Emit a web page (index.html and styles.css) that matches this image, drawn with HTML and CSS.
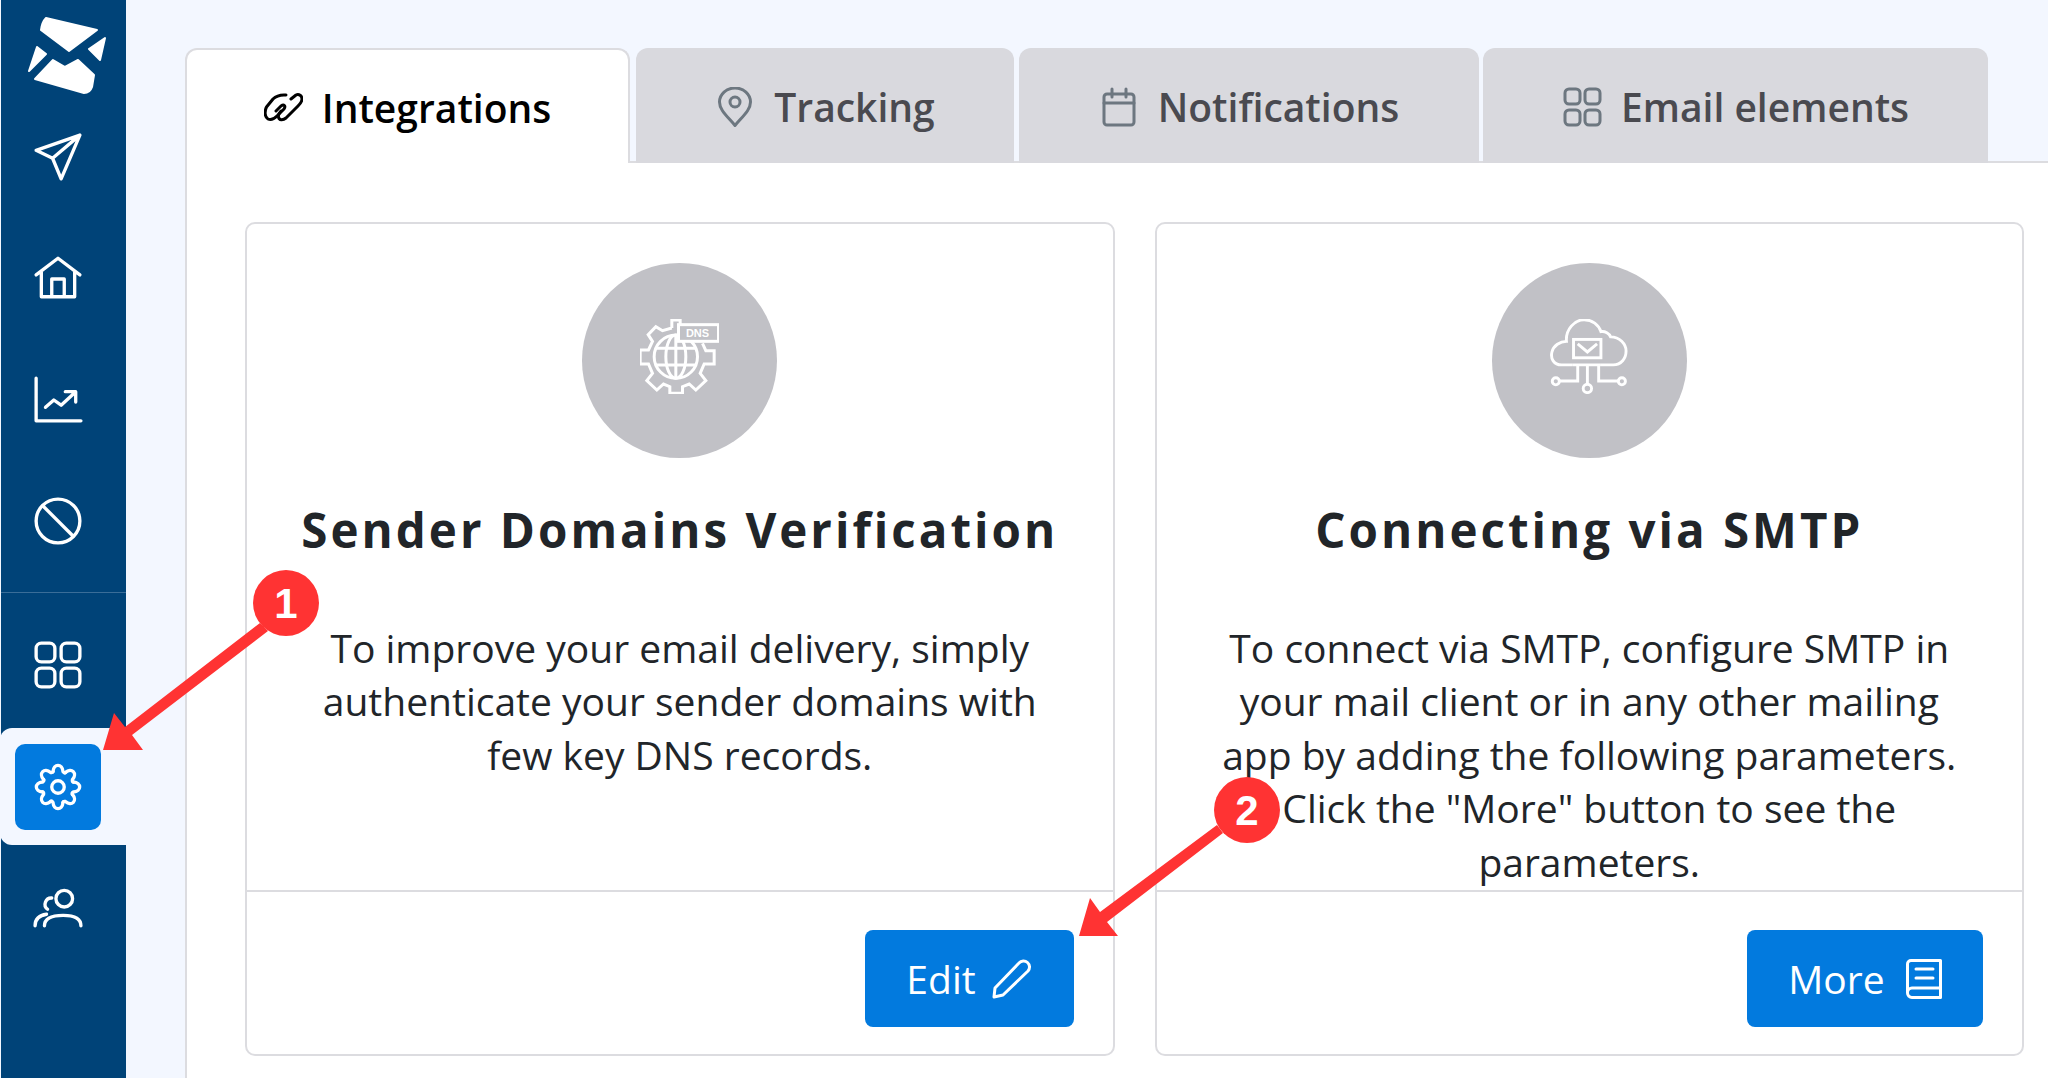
FILE: index.html
```html
<!DOCTYPE html>
<html lang="en">
<head>
<meta charset="utf-8">
<title>Integrations</title>
<link rel="stylesheet" href="styles.css">
</head>
<body>
<div class="app">
  <aside class="sidebar">
    <div class="logo">
      <svg width="78" height="78" viewBox="28 16 78 78"><g fill="#fff" stroke="#fff" stroke-width="2" stroke-linejoin="round"><path d="M46 18 L97 30 L69 51 L41 30 Q42 22 46 18Z"/><path d="M37 47 L46 54 L29 71Z"/><path d="M105 38 L100 60 L89 49Z"/><path d="M53 60 L65 67 L78 60 L94 75 L92 87 Q90 93 84 93 L35 79Z"/></g></svg>
    </div>
    <nav class="nav">
      <a class="nav-item"><svg class="ico" viewBox="0 0 24 24"><path d="M22.5 1.5 L1.5 8.8 L9.4 12.6 L13.5 22.5 Z M9.4 12.6 L22.5 1.5"/></svg></a>
      <a class="nav-item"><svg class="ico" viewBox="0 0 24 24"><path d="M1.5 10.5 L12 2.5 L22.5 10.5 M4 9V21H20V9 M9 21V12.5H15V21"/></svg></a>
      <a class="nav-item"><svg class="ico" viewBox="0 0 24 24"><path d="M1.5 1.5V22H23 M6 15.5 L10 12 L13.5 14.5 L20 8.5 M15.5 8 H20.5 V13"/></svg></a>
      <a class="nav-item"><svg class="ico" viewBox="0 0 24 24"><circle cx="12" cy="12" r="10.5"/><path d="M4.8 4.8 L19.2 19.2"/></svg></a>
    </nav>
    <div class="nav-rule"></div>
    <nav class="nav nav-lower">
      <a class="nav-item"><svg class="ico" viewBox="0 0 24 24"><rect x="1.5" y="1.5" width="9" height="9" rx="2.5"/><rect x="13.5" y="1.5" width="9" height="9" rx="2.5"/><rect x="1.5" y="13.5" width="9" height="9" rx="2.5"/><rect x="13.5" y="13.5" width="9" height="9" rx="2.5"/></svg></a>
      <a class="nav-item nav-active"><span class="nav-chip"><svg class="ico" viewBox="0 0 24 24">
        <defs><path id="tooth" d="M9.6 4.6 C9.9 0.6 14.1 0.6 14.4 4.6 Q15 5.5 15.6 5.1"/></defs>
        <use href="#tooth"/><use href="#tooth" transform="rotate(45 12 12)"/><use href="#tooth" transform="rotate(90 12 12)"/><use href="#tooth" transform="rotate(135 12 12)"/><use href="#tooth" transform="rotate(180 12 12)"/><use href="#tooth" transform="rotate(225 12 12)"/><use href="#tooth" transform="rotate(270 12 12)"/><use href="#tooth" transform="rotate(315 12 12)"/>
        <circle cx="12" cy="12" r="3"/></svg></span></a>
      <a class="nav-item"><svg class="ico" viewBox="0 0 24 24"><circle cx="15" cy="7.5" r="4"/><path d="M5.5 20.5 C5.5 16.5 10 15.5 14.5 15.5 C19 15.5 23 16.5 23 20.5 M9 7.2 A3 3 0 0 0 7 12.6 M1 20.5 C1 17.5 3 15.5 6.5 15"/></svg></a>
    </nav>
  </aside>

  <main class="main">
    <div class="tabs">
      <a class="tab tab-active"><svg class="tab-ico tab-ico-link" viewBox="0 0 39 29"><path d="M22 2 C16 1.5 12 3 9 6 L2.5 14 C0.5 18 0.5 24 4 26 C7 27.5 10 26 13 23 L20 16 C22 13 20 11 17 13 L12 18"/><path d="M17 18 C15 20 14 22 14.5 24 C15 27.5 19 27.5 22 25 L34 13 C36 11 38 9 38 6 C38 3 35 0.5 32 2 L27 6"/></svg><span>Integrations</span></a>
      <a class="tab"><svg class="tab-ico tab-ico-grey" viewBox="0 0 40 40"><path d="M20 38.5 C12 29 4.5 23 4.5 15 A15.5 14 0 0 1 35.5 15 C35.5 23 28 29 20 38.5Z"/><circle cx="20" cy="15" r="5"/></svg><span>Tracking</span></a>
      <a class="tab"><svg class="tab-ico tab-ico-grey" viewBox="0 0 40 40"><rect x="5" y="7" width="30" height="31" rx="3"/><path d="M5 16H35 M13 2V10 M27 2V10"/></svg><span>Notifications</span></a>
      <a class="tab"><svg class="tab-ico tab-ico-grey" viewBox="0 0 40 40"><rect x="3" y="2" width="15" height="15" rx="4"/><rect x="23" y="2" width="15" height="15" rx="4"/><rect x="3" y="23" width="15" height="15" rx="4"/><rect x="23" y="23" width="15" height="15" rx="4"/></svg><span>Email elements</span></a>
    </div>
    <section class="panel">
      <article class="card">
        <div class="card-body">
          <div class="disc">
            <svg class="disc-art" width="79" height="75" viewBox="238 205 236 225"><path d="M333 232 V208 H358 V222 M333 232 L305 240 L285 228 L262 252 L275 272 L263 298 H238 V340 H263 L275 368 L258 390 L288 418 L308 400 L327 408 V428 H365 V408 L385 400 L405 418 L435 390 L418 368 L430 340 H460 V300 H435 L425 278"/><circle cx="345" cy="318" r="65"/><ellipse cx="345" cy="318" rx="30" ry="65"/><path d="M345 253V383 M285 293H405 M285 343H405"/><rect class="dns-box" x="353" y="222" width="120" height="50"/><text class="dns" x="410" y="260" text-anchor="middle">DNS</text></svg>
          </div>
          <h2 class="card-title">Sender Domains Verification</h2>
          <p class="card-text">To improve your email delivery, simply<br>authenticate your sender domains with<br>few key DNS records.</p>
        </div>
        <footer class="card-foot">
          <a class="btn btn-edit">Edit<svg class="btn-ico" width="40" height="40" viewBox="0 0 40 40"><path d="M2 38 L3 29 L27 4 A5.5 5.5 0 0 1 36 12 L11 36 Z"/></svg></a>
        </footer>
      </article>
      <article class="card">
        <div class="card-body">
          <div class="disc">
            <svg class="disc-art" width="78" height="75" viewBox="234 203 242 232"><path d="M305 345 H270 C245 345 235 325 240 305 C245 285 265 272 285 272 C282 235 310 205 340 205 C365 205 385 220 392 242 C405 240 418 248 422 258 C450 258 470 280 470 302 C470 325 455 345 430 345 H392"/><rect x="307" y="266" width="85" height="57"/><path d="M320 280 L350 305 L380 280 M305 345 H392 M320 345 V395 H263 M350 345 V405 M385 345 V395 H447"/><circle cx="252" cy="396" r="11"/><circle cx="457" cy="396" r="11"/><circle cx="350" cy="418" r="13"/></svg>
          </div>
          <h2 class="card-title">Connecting via SMTP</h2>
          <p class="card-text">To connect via SMTP, configure SMTP in<br>your mail client or in any other mailing<br>app by adding the following parameters.<br>Click the "More" button to see the<br>parameters.</p>
        </div>
        <footer class="card-foot">
          <a class="btn btn-more">More<svg class="btn-ico" width="36" height="40" viewBox="0 0 36 40"><path d="M5 1.5H34.5V38.5H6 A4.5 4.5 0 0 1 1.5 34 V5 A3.5 3.5 0 0 1 5 1.5Z M1.5 33 A4.5 4.5 0 0 1 6 29 H34.5 M10 10H27 M10 19H27"/></svg></a>
        </footer>
      </article>
    </section>
  </main>
</div>

<svg class="marks" width="2048" height="1078" viewBox="0 0 2048 1078">
  <g fill="#ff3333">
    <path d="M260 623 L125 727 L114 713 L103 750 L143 750 L132 735 L268 631Z"/>
    <circle cx="286" cy="603" r="33"/>
    <path d="M1217 825 L1100 912 L1090 898 L1079 936 L1118 936 L1107 922 L1223 833Z"/>
    <circle cx="1247" cy="810" r="33"/>
  </g>
  <text class="mark-num" x="286" y="618" text-anchor="middle">1</text>
  <text class="mark-num" x="1247" y="825" text-anchor="middle">2</text>
</svg>
</body>
</html>
```

FILE: styles.css
```css
* { box-sizing: border-box; }
html, body { margin: 0; height: 100%; overflow: hidden; }
body { background: #f3f7ff; font-family: "Open Sans", sans-serif; color: #212529; position: relative; }

.app { display: flex; height: 1078px; }

.sidebar { width: 125px; margin-left: 1px; background: #004378; flex: none; }
.logo { height: 96px; padding: 16px 0 0 27px; }
.logo svg { display: block; }
.nav { display: flex; flex-direction: column; }
.nav-item { height: 121.5px; display: flex; align-items: center; justify-content: center; padding-right: 11px; }
.ico { width: 50px; height: 50px; fill: none; stroke: #fff; stroke-width: 1.6; stroke-linecap: round; stroke-linejoin: round; display: block; }
.nav-rule { height: 1px; margin-top: 10px; background: #3a6d98; }
.nav-lower { padding-top: 11px; }
.nav-active { height: 117px; margin: 2.5px 0 2px -1px; width: 126px; background: #f3f7ff; border-radius: 12px 0 0 12px; justify-content: flex-start; padding: 0 0 0 15px; }
.nav-chip { width: 86px; height: 86px; border-radius: 10px; background: #027ade; display: flex; align-items: center; justify-content: center; }

.main { flex: 1; padding: 48px 0 0 59px; min-width: 0; }
.tabs { display: flex; height: 115px; position: relative; z-index: 1; }
.tab { display: flex; align-items: center; justify-content: center; gap: 19px; height: 115px; padding-top: 2px; font-size: 39px; font-weight: 600; color: #4a4a50; background: #d9d9de; border-radius: 12px 12px 0 0; }
.tab:nth-child(1) { width: 445px; }
.tab:nth-child(2) { width: 378px; margin-left: 6px; }
.tab:nth-child(3) { width: 460px; margin-left: 5px; }
.tab:nth-child(4) { width: 505px; margin-left: 4px; }
.tab-active { color: #000; background: #fff; border: 2px solid #dcdce0; border-bottom: 0; }
.tab-ico { width: 40px; height: 40px; fill: none; stroke: #000; stroke-width: 3; stroke-linecap: round; stroke-linejoin: round; flex: none; }
.tab-ico-link { width: 39px; height: 29px; }
.tab-ico-grey { stroke: #6d7780; }

.panel { display: grid; grid-template-columns: 1fr 1fr; gap: 40px; margin-top: -2px; padding: 59px 24px 0 58px; background: #fff; border-top: 2px solid #dcdce0; border-left: 2px solid #dcdce0; height: 950px; }

.card { height: 834px; min-height: 0; border: 2px solid #dcdce0; border-radius: 10px; background: #fff; display: flex; flex-direction: column; overflow: hidden; }
.card-body { flex: 1; min-height: 0; padding-top: 39px; text-align: center; }
.disc { width: 195px; height: 195px; margin: 0 auto; border-radius: 50%; background: #c1c1c6; display: flex; align-items: center; justify-content: center; padding-bottom: 9px; }
.disc-art { fill: none; stroke: #fff; stroke-width: 9; }
.dns-box { fill: #c1c1c6; }
.dns { font: 700 33px "Liberation Sans", sans-serif; fill: #fff; stroke: none; }
.card-title { margin: 40px 0 0; font-size: 47.5px; line-height: 64px; font-weight: 700; letter-spacing: 3px; color: #212529; }
.card-text { margin: 59px 0 0; font-size: 39px; line-height: 53.4px; color: #212529; }

.card-foot { height: 164px; flex: none; border-top: 2px solid #dcdce0; display: flex; justify-content: flex-end; padding: 38px 39px 0 0; }
.btn { height: 97px; display: flex; align-items: center; justify-content: center; gap: 19px; background: #027ade; color: #fff; font-size: 39px; border-radius: 8px; }
.btn-edit { width: 209px; gap: 16px; }
.btn-more { width: 236px; gap: 21px; }
.btn-ico { fill: none; stroke: #fff; stroke-width: 3; stroke-linecap: round; stroke-linejoin: round; flex: none; }

.marks { position: absolute; left: 0; top: 0; z-index: 5; pointer-events: none; }
.mark-num { font: 700 42px "Liberation Sans", sans-serif; fill: #fff; }
```
